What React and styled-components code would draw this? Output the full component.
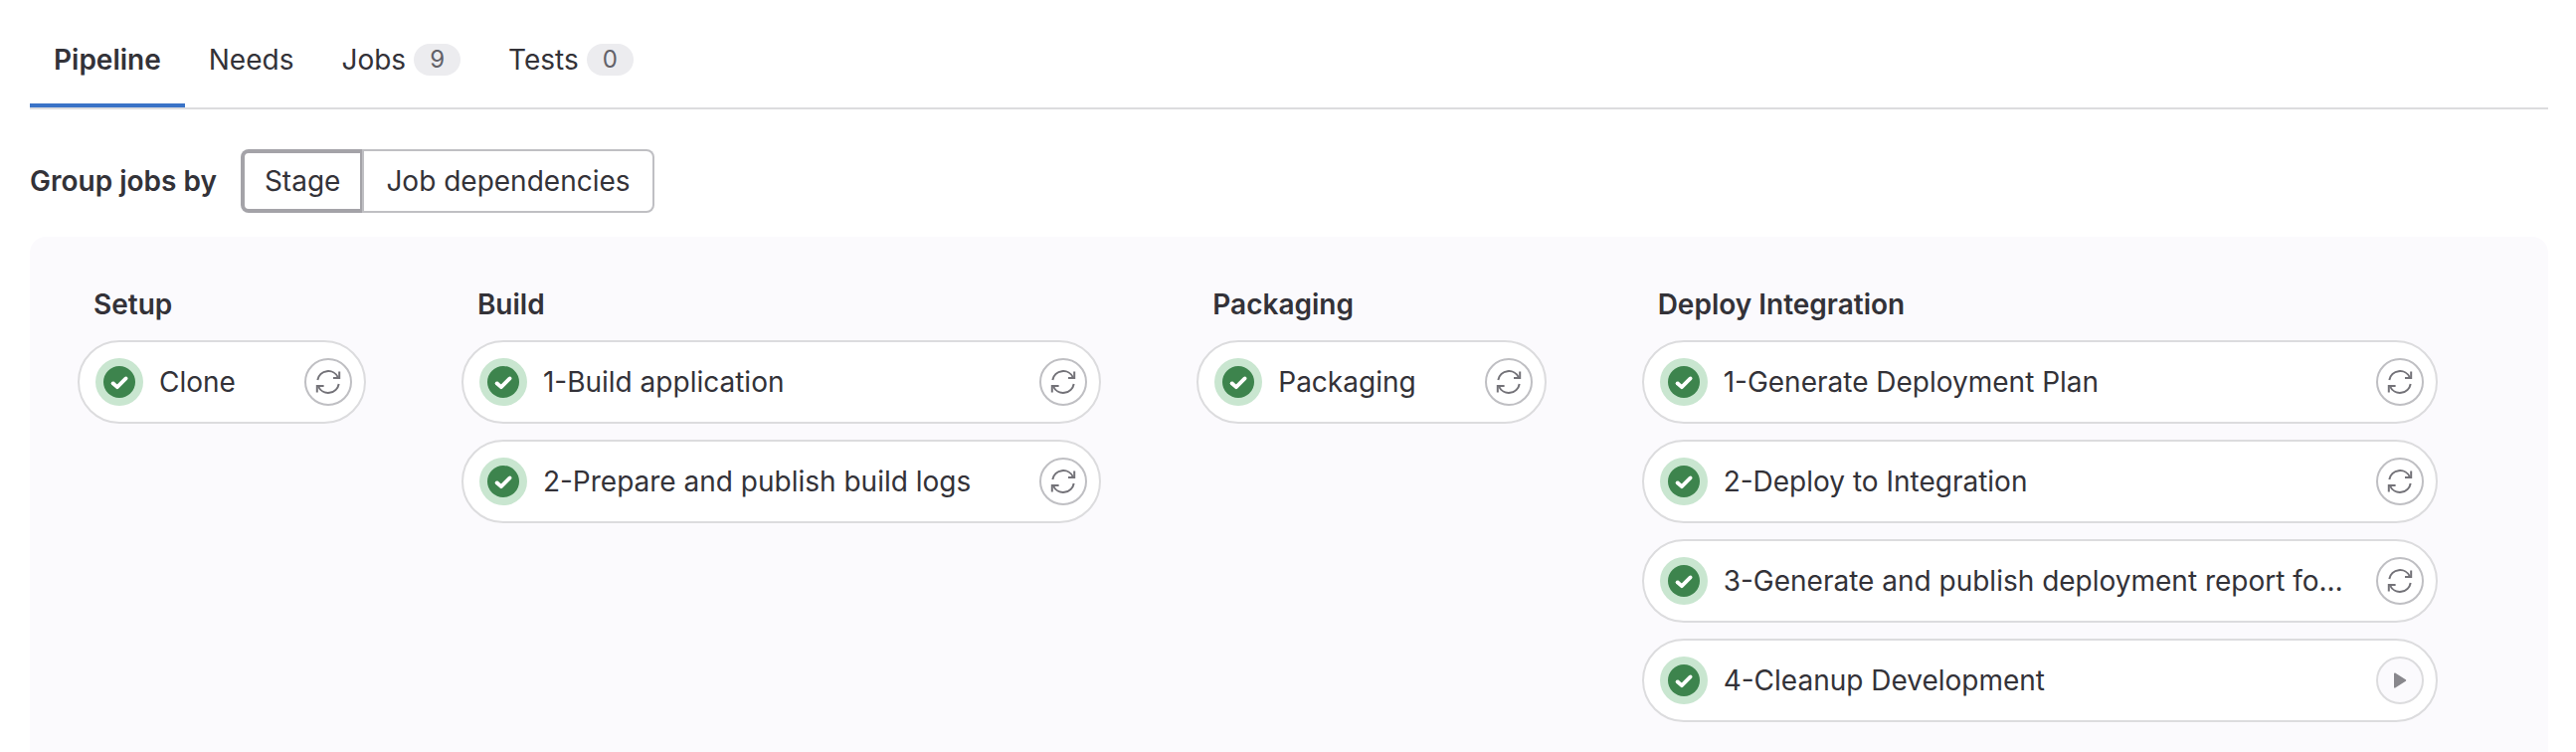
import React, { useState } from 'react';
import styled, { createGlobalStyle } from 'styled-components';

const GlobalStyle = createGlobalStyle`
  *, *::before, *::after { box-sizing: border-box; }
  body {
    margin: 0;
    background: #fff;
    color: #333238;
    font-family: Inter, "Noto Sans", sans-serif;
    font-size: 28px;
    line-height: 32px;
  }
  button { font: inherit; color: inherit; cursor: pointer; }
`;

const Page = styled.main`
  padding: 12px 28px 0 30px;
`;

const TabBar = styled.nav`
  display: flex;
  border-bottom: 2px solid #dcdcde;
`;

const Tab = styled.a`
  display: flex;
  align-items: center;
  gap: 8px;
  padding: 32px 24px;
  color: inherit;
  text-decoration: none;
  font-weight: ${(p) => (p.$active ? 600 : 400)};
  box-shadow: ${(p) => (p.$active ? 'inset 0 -4px 0 #3a73c7' : 'none')};
`;

const Badge = styled.span`
  padding: 0 16px;
  border-radius: 16px;
  background: #ececef;
  color: #626168;
  font-size: 24px;
`;

const Toolbar = styled.div`
  display: flex;
  align-items: center;
  gap: 24px;
  padding: 40px 0 24px;
`;

const ToolbarLabel = styled.span`
  font-weight: 600;
`;

const Segments = styled.div`
  display: flex;
`;

const Segment = styled.button`
  padding: 16px 24px;
  border: 0;
  background: #fff;
  box-shadow: inset 0 0 0 ${(p) => (p.$selected ? '4px #a4a3a8' : '2px #bfbfc3')};
  &:first-child { border-radius: 8px 0 0 8px; }
  &:last-child { border-radius: 0 8px 8px 0; margin-left: -2px; }
`;

const Graph = styled.section`
  display: flex;
  align-items: flex-start;
  gap: 96px;
  padding: 48px 48px 30px;
  border-radius: 16px 16px 0 0;
  background: #fbfafd;
`;

const Stage = styled.section`
  flex: 0 1 auto;
  min-width: 0;
  max-width: 800px;
`;

const StageTitle = styled.h2`
  margin: 0;
  padding: 4px 16px 20px;
  font-size: 28px;
  line-height: 32px;
  font-weight: 600;
`;

const JobList = styled.ul`
  display: flex;
  flex-direction: column;
  gap: 16px;
  margin: 0;
  padding: 0;
  list-style: none;
`;

const Job = styled.li`
  display: flex;
  align-items: center;
  gap: 16px;
  height: 84px;
  padding: 0 12px 0 16px;
  border: 2px solid #dcdcde;
  border-radius: 42px;
  background: #fff;
`;

const JobLabel = styled.div`
  display: flex;
  flex: 1 1 auto;
  min-width: 0;
  &::after {
    content: '';
    flex-shrink: 100000;
    width: 53px;
  }
`;

const JobName = styled.a`
  min-width: 0;
  overflow: hidden;
  color: inherit;
  text-decoration: none;
  text-overflow: ellipsis;
  white-space: nowrap;
`;

const ActionButton = styled.button`
  display: flex;
  flex: none;
  align-items: center;
  justify-content: center;
  width: 48px;
  height: 48px;
  padding: 0;
  border: 2px solid ${(p) => (p.$muted ? '#dcdcde' : '#bfbfc3')};
  border-radius: 50%;
  background: ${(p) => (p.$muted ? '#fbfafd' : '#fff')};
  color: ${(p) => (p.$muted ? '#89888d' : '#737278')};
`;

const StatusSvg = styled.svg`
  flex: none;
  width: 48px;
  height: 48px;
`;

const ActionSvg = styled.svg`
  width: 24px;
  height: 24px;
  overflow: visible;
`;

const PassedIcon = () => (
  <StatusSvg viewBox="0 0 48 48" role="img" aria-label="Passed">
    <circle cx="24" cy="24" r="24" fill="#c9e6d0" />
    <circle cx="24" cy="24" r="16" fill="#3d844d" />
    <path d="M17.2 25 L21.9 29.2 L30.6 20.4" fill="none" stroke="#fff" strokeWidth="3.8" strokeLinecap="butt" strokeLinejoin="round" />
    <circle cx="17.5" cy="25.2" r="1.8" fill="#fff" />
    <circle cx="30.7" cy="20.4" r="1.8" fill="#fff" />
  </StatusSvg>
);

const RetryIcon = () => (
  <ActionSvg viewBox="0 0 24 24" fill="none" stroke="currentColor" strokeWidth="2" aria-hidden="true">
    <path d="M1.3 10 A10.9 10.9 0 0 1 22 7.6" />
    <path d="M23.2 1.6 V8 H17" />
    <path d="M22.7 14 A10.9 10.9 0 0 1 2 16.4" />
    <path d="M0.8 22.4 V16 H7.6" />
  </ActionSvg>
);

const PlayIcon = () => (
  <ActionSvg viewBox="0 0 24 24" fill="currentColor" stroke="currentColor" strokeWidth="1.6" strokeLinejoin="round" aria-hidden="true">
    <path d="M6.8 5.2 L17.4 12 L6.8 18.8 Z" />
  </ActionSvg>
);

const tabs = [
  { name: 'Pipeline' },
  { name: 'Needs' },
  { name: 'Jobs', count: 9 },
  { name: 'Tests', count: 0 },
];

const groupings = ['Stage', 'Job dependencies'];

const stages = [
  { name: 'Setup', jobs: [{ name: 'Clone' }] },
  { name: 'Build', jobs: [{ name: '1-Build application' }, { name: '2-Prepare and publish build logs' }] },
  { name: 'Packaging', jobs: [{ name: 'Packaging' }] },
  {
    name: 'Deploy Integration',
    jobs: [
      { name: '1-Generate Deployment Plan' },
      { name: '2-Deploy to Integration' },
      { name: '3-Generate and publish deployment report fo…' },
      { name: '4-Cleanup Development', manual: true },
    ],
  },
];

export default function App() {
  const [tab, setTab] = useState('Pipeline');
  const [grouping, setGrouping] = useState('Stage');

  return (
    <>
      <GlobalStyle />
      <Page>
        <TabBar>
          {tabs.map(({ name, count }) => (
            <Tab
              key={name}
              href={`#${name.toLowerCase()}`}
              $active={tab === name}
              aria-current={tab === name ? 'page' : undefined}
              onClick={() => setTab(name)}
            >
              {name}
              {count !== undefined && <Badge>{count}</Badge>}
            </Tab>
          ))}
        </TabBar>
        <Toolbar>
          <ToolbarLabel id="group-label">Group jobs by</ToolbarLabel>
          <Segments role="group" aria-labelledby="group-label">
            {groupings.map((name) => (
              <Segment
                key={name}
                type="button"
                $selected={grouping === name}
                aria-pressed={grouping === name}
                onClick={() => setGrouping(name)}
              >
                {name}
              </Segment>
            ))}
          </Segments>
        </Toolbar>
        <Graph>
          {stages.map((stage) => (
            <Stage key={stage.name}>
              <StageTitle>{stage.name}</StageTitle>
              <JobList>
                {stage.jobs.map((job) => (
                  <Job key={job.name}>
                    <PassedIcon />
                    <JobLabel>
                      <JobName href="#job">{job.name}</JobName>
                    </JobLabel>
                    <ActionButton
                      type="button"
                      $muted={job.manual}
                      aria-label={`${job.manual ? 'Run' : 'Retry'} ${job.name}`}
                    >
                      {job.manual ? <PlayIcon /> : <RetryIcon />}
                    </ActionButton>
                  </Job>
                ))}
              </JobList>
            </Stage>
          ))}
        </Graph>
      </Page>
    </>
  );
}
